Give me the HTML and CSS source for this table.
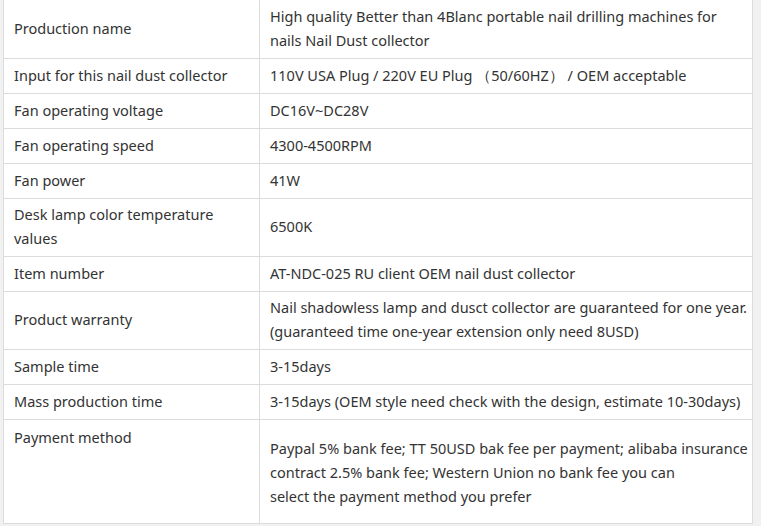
FILE: index.html
```html
<!DOCTYPE html>
<html>
<head>
<meta charset="utf-8">
<link rel="stylesheet" href="styles.css">
</head>
<body>
<div class="wrap">
<table class="spec">
<colgroup><col class="c1"><col class="c2"></colgroup>
<tbody>
<tr><td>Production name</td><td>High quality Better than 4Blanc portable nail drilling machines for<br>nails Nail Dust collector</td></tr>
<tr><td>Input for this nail dust collector</td><td>110V USA Plug / 220V EU Plug （50/60HZ） / OEM acceptable</td></tr>
<tr><td>Fan operating voltage</td><td>DC16V~DC28V</td></tr>
<tr><td>Fan operating speed</td><td>4300-4500RPM</td></tr>
<tr><td>Fan power</td><td>41W</td></tr>
<tr class="two"><td>Desk lamp color temperature<br>values</td><td>6500K</td></tr>
<tr><td>Item number</td><td>AT-NDC-025 RU client OEM nail dust collector</td></tr>
<tr class="two"><td>Product warranty</td><td>Nail shadowless lamp and dusct collector are guaranteed for one year.<br>(guaranteed time one-year extension only need 8USD)</td></tr>
<tr><td>Sample time</td><td>3-15days</td></tr>
<tr><td>Mass production time</td><td>3-15days (OEM style need check with the design, estimate 10-30days)</td></tr>
<tr class="pay"><td>Payment method</td><td>Paypal 5% bank fee; TT 50USD bak fee per payment; alibaba insurance<br>contract 2.5% bank fee; Western Union no bank fee you can<br>select the payment method you prefer</td></tr>
</tbody>
</table>
</div>
</body>
</html>
```
FILE: styles.css
```css
html, body {
  margin: 0;
  padding: 0;
  background: #f1f1f1;
  height: 526px;
  overflow: hidden;
}
.wrap {
  margin-left: 3px;
  margin-top: -1px;
  width: 750px;
  background: #fff;
}
.spec {
  border-collapse: collapse;
  width: 750px;
  table-layout: fixed;
  font-family: "Noto Sans", "Open Sans", sans-serif;
  font-size: 14.5px;
  line-height: 24px;
  color: #333;
}
.c1 { width: 256px; }
.spec td {
  border: 1px solid #dcdcdc;
  padding: 4px 10px 6px;
  vertical-align: middle;
  white-space: nowrap;
}
.two td {
  padding-top: 3px;
  padding-bottom: 6px;
}
.pay td {
  vertical-align: top;
  padding-top: 5px;
}
.pay td:last-child {
  padding-top: 16px;
  padding-bottom: 15px;
}
```
